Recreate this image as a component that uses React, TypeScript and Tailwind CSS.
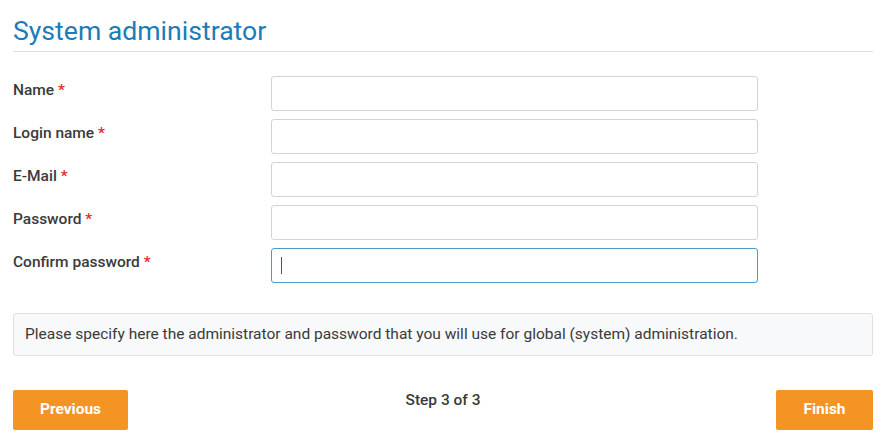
import React from 'react';

const fields = ['Name', 'Login name', 'E-Mail', 'Password', 'Confirm password'];

function Field({ label, focused }: { label: string; focused?: boolean }) {
  return (
    <div className="flex items-start">
      <label className="w-[258px] pt-[4px] text-[15.5px] font-medium leading-[20px] text-[#3a3a3a]">
        {label} <span className="text-[#e8262b]">*</span>
      </label>
      <div className="relative">
        <input
          type={label.toLowerCase().includes('password') ? 'password' : 'text'}
          className={
            focused
              ? 'h-[35px] w-[487px] rounded-[3px] border border-[#4b9ccb] bg-white px-[10px] text-[15px] outline-none'
              : 'h-[35px] w-[487px] rounded-[3px] border border-[#d4d4d4] bg-white px-[10px] text-[15px] outline-none'
          }
        />
        {focused && <span className="absolute left-[10px] top-[9px] h-[17px] w-px bg-[#555]" />}
      </div>
    </div>
  );
}

export default function App() {
  return (
    <div className="h-[448px] w-[886px] bg-white px-[13px] pt-[15px] font-['Roboto',sans-serif]">
      <div className="w-[860px]">
        <h1 className="border-b border-[#dedede] pb-[5px] text-[26.6px] leading-[31px] text-[#1d7bb8]">
          System administrator
        </h1>

        <div className="mt-[24px] flex flex-col gap-[8px]">
          {fields.map((f, i) => (
            <Field key={f} label={f} focused={i === fields.length - 1} />
          ))}
        </div>

        <div className="mt-[30px] flex h-[43px] items-center rounded-[3px] border border-[#e0e0e0] bg-[#f8f9fb] px-[11px] text-[15.5px] text-[#3a3a3a]">
          Please specify here the administrator and password that you will use for global (system) administration.
        </div>

        <div className="mt-[34px] flex items-start">
          <div className="flex-1">
            <button className="h-[40px] w-[115px] rounded-[2px] bg-[#f39424] text-[15.5px] font-bold text-white">
              Previous
            </button>
          </div>
          <div className="text-[15.5px] font-medium leading-[20px] text-[#3a3a3a]">Step 3 of 3</div>
          <div className="flex flex-1 justify-end">
            <button className="h-[40px] w-[97px] rounded-[2px] bg-[#f39424] text-[15.5px] font-bold text-white">
              Finish
            </button>
          </div>
        </div>
      </div>
    </div>
  );
}
